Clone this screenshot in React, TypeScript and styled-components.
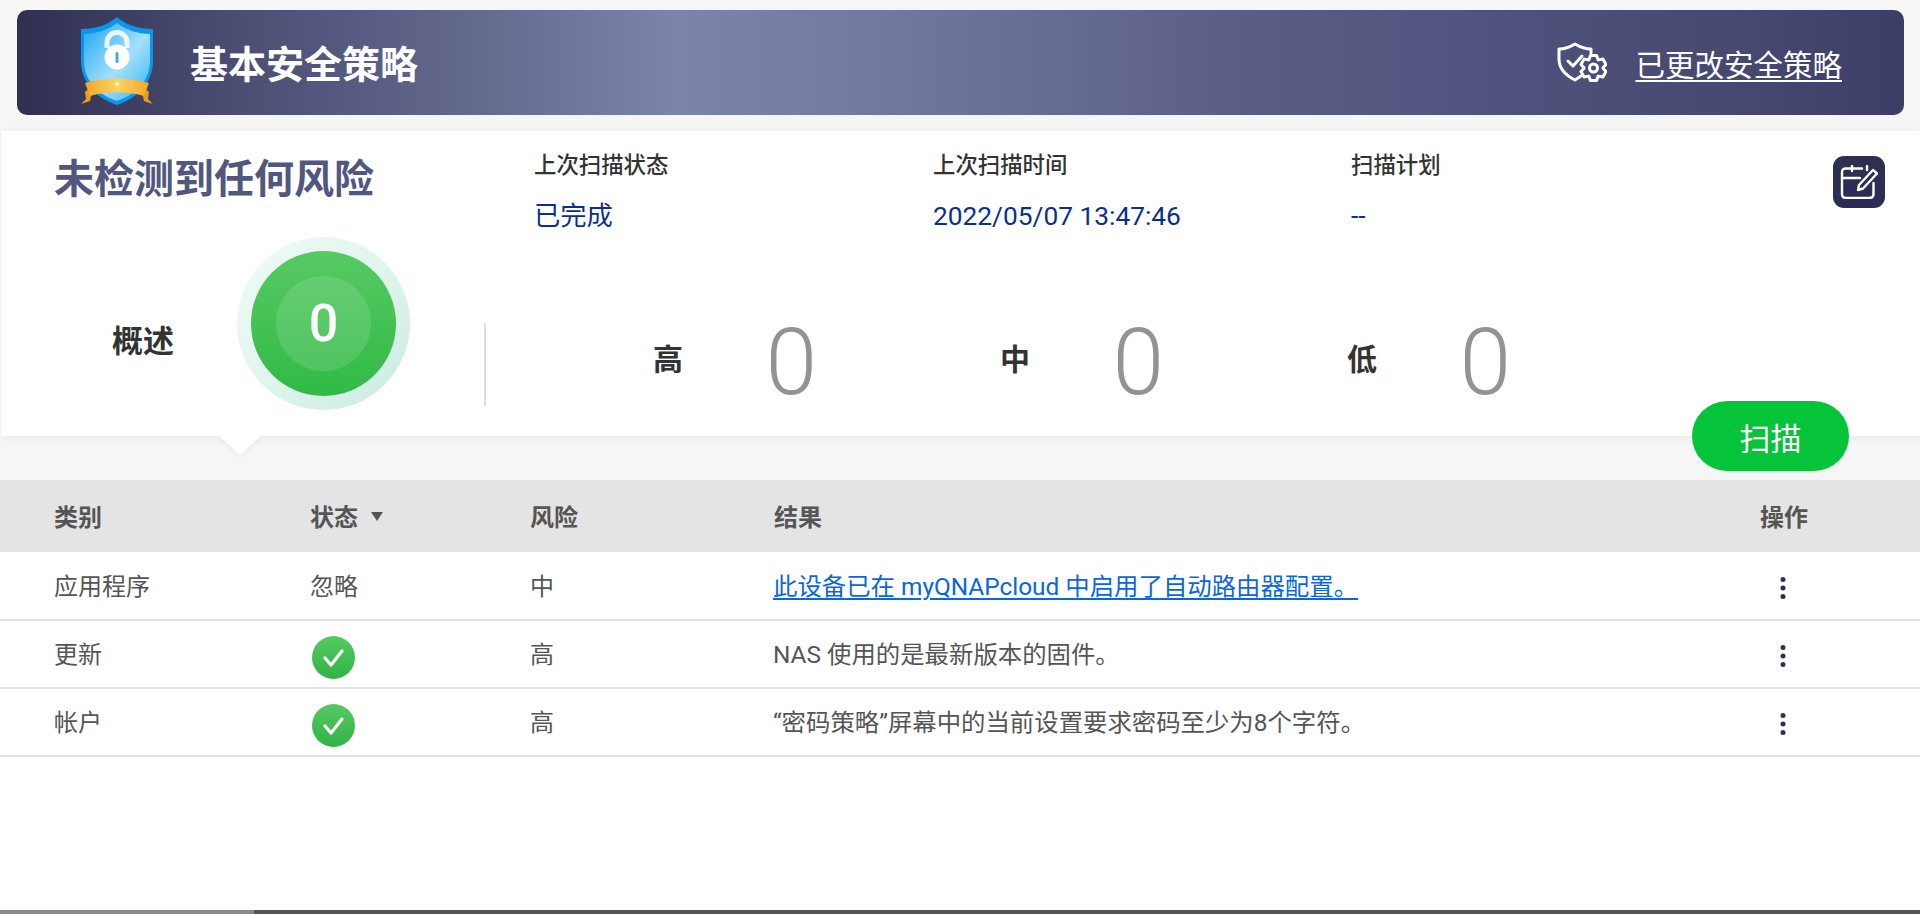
import styled, { createGlobalStyle } from 'styled-components';

const GlobalStyle = createGlobalStyle`
  html, body {
    margin: 0;
    padding: 0;
    background: #fff;
  }
  * {
    box-sizing: border-box;
  }
  body {
    font-family: Roboto, "Noto Sans CJK SC", sans-serif;
    overflow: hidden;
  }
`;

const rows = [
  { category: '应用程序', status: '忽略', risk: '中', result: '此设备已在 myQNAPcloud 中启用了自动路由器配置。', link: true },
  { category: '更新', status: 'ok', risk: '高', result: 'NAS 使用的是最新版本的固件。', link: false },
  { category: '帐户', status: 'ok', risk: '高', result: '“密码策略”屏幕中的当前设置要求密码至少为8个字符。', link: false },
];

const ShieldLogo = () => (
  <svg width="74" height="89" viewBox="0 0 74 89">
    <defs>
      <linearGradient id="shieldFill" x1="0" y1="0" x2="1" y2="1">
        <stop offset="0" stopColor="#1aa7f2" />
        <stop offset="0.55" stopColor="#a5e0fb" />
        <stop offset="1" stopColor="#2cb4f0" />
      </linearGradient>
      <linearGradient id="ribbonFill" x1="0" y1="0" x2="1" y2="0">
        <stop offset="0" stopColor="#f3a52a" />
        <stop offset="0.5" stopColor="#fbd35f" />
        <stop offset="1" stopColor="#f3a52a" />
      </linearGradient>
    </defs>
    <path d="M37 0C46 8 58 12 73 12V44C73 64 60 80 37 88C14 80 1 64 1 44V12C16 12 28 8 37 0Z" fill="#0c95ec" />
    <path d="M37 6C46 13 58 17 70 17V44C70 62 58 77 37 84C16 77 4 62 4 44V17C16 17 28 13 37 6Z" fill="url(#shieldFill)" />
    <path d="M5 75L14 66L10 84L1 87L6 82Z" fill="#eb9d1f" />
    <path d="M69 75L60 66L64 84L73 87L68 82Z" fill="#eb9d1f" />
    <path d="M5 66C26 60 48 60 69 66L64 79C46 74 28 74 10 79Z" fill="url(#ribbonFill)" />
    <circle cx="37" cy="67" r="2" fill="#fff4bf" />
    <path d="M27 31V26C27 12 47 12 47 26V31" fill="none" stroke="#fff" strokeOpacity="0.85" strokeWidth="5" />
    <circle cx="37" cy="40" r="12.500" fill="#fff" />
    <rect x="35.500" y="35" width="3" height="11" rx="1.500" fill="#4aa8d8" />
  </svg>
);

// outline of a six tooth gear around (cx, cy)
const gearPath = (cx: number, cy: number, outer: number, inner: number) => {
  const points: string[] = [];
  for (let i = 0; i < 6; i++) {
    const mid = (i * Math.PI) / 3 - Math.PI / 2;
    [
      [inner, mid - 0.5],
      [outer, mid - 0.24],
      [outer, mid + 0.24],
      [inner, mid + 0.5],
    ].forEach(([r, a]) => {
      points.push(`${(cx + r * Math.cos(a)).toFixed(1)} ${(cy + r * Math.sin(a)).toFixed(1)}`);
    });
  }
  return `M${points.join('L')}Z`;
};

const PolicyIcon = () => (
  <svg width="50" height="42" viewBox="0 0 50 42" fill="none" stroke="#fff" strokeWidth="3" strokeLinejoin="round" strokeLinecap="round">
    <path d="M24 34C22 35.500 20 36.500 18 38C8 33 2 27 2 17V7C8 7 13 5 18 2C23 5 28 7 34 7V11" />
    <path d="M11 19L16 24L25 14" />
    <path d={gearPath(36.500, 26, 13, 9.500)} />
    <circle cx="36.500" cy="26" r="4" />
  </svg>
);

const CalendarEditIcon = () => (
  <svg width="38" height="34" viewBox="0 0 38 34" fill="none" stroke="#fff" strokeWidth="2.400" strokeLinecap="round" strokeLinejoin="round">
    <path d="M33.500 18V29C33.500 32 32 33 29 33H6C3 33 2 32 2 29V7C2 4.500 3 3.500 6 3.500H22" />
    <path d="M2 13H20" />
    <path d="M12 1V6" />
    <path d="M27 1V5" />
    <path d="M18 25L19 20L33 5L37 8.500L23 23.500Z" />
  </svg>
);

const CheckBadge = () => (
  <svg width="43" height="43" viewBox="0 0 43 43">
    <defs>
      <linearGradient id="checkFill" x1="0" y1="0" x2="0" y2="1">
        <stop offset="0" stopColor="#58c964" />
        <stop offset="1" stopColor="#2fb344" />
      </linearGradient>
    </defs>
    <circle cx="21.500" cy="21.500" r="21.500" fill="url(#checkFill)" />
    <path d="M13 22L19 29L30 15" fill="none" stroke="#fff" strokeWidth="3.200" strokeLinecap="round" strokeLinejoin="round" />
  </svg>
);

const MoreIcon = () => (
  <svg width="6" height="24" viewBox="0 0 6 24" fill="#2f3050">
    <circle cx="3" cy="3.500" r="2.500" />
    <circle cx="3" cy="12" r="2.500" />
    <circle cx="3" cy="20.500" r="2.500" />
  </svg>
);

export default function App() {
  return (
    <Page>
      <GlobalStyle />
      <Banner>
        <BannerLeft>
          <LogoWrap>
            <ShieldLogo />
          </LogoWrap>
          <BannerTitle>基本安全策略</BannerTitle>
        </BannerLeft>
        <BannerRight>
          <PolicyIcon />
          <BannerLink>已更改安全策略</BannerLink>
        </BannerRight>
      </Banner>

      <Panel>
        <TopRow>
          <PanelTitle>未检测到任何风险</PanelTitle>
          <Info>
            <InfoLabel>上次扫描状态</InfoLabel>
            <InfoValue>已完成</InfoValue>
          </Info>
          <Info>
            <InfoLabel>上次扫描时间</InfoLabel>
            <InfoValue>2022/05/07 13:47:46</InfoValue>
          </Info>
          <Info>
            <InfoLabel>扫描计划</InfoLabel>
            <InfoValue>--</InfoValue>
          </Info>
          <EditButton>
            <CalendarEditIcon />
          </EditButton>
        </TopRow>
        <SummaryRow>
          <SummaryLabel>概述</SummaryLabel>
          <Halo>
            <Disc>
              <DiscCenter>0</DiscCenter>
            </Disc>
          </Halo>
          <Divider />
          <Stats>
            {['高', '中', '低'].map((level) => (
              <Stat key={level}>
                <StatLabel>{level}</StatLabel>
                <StatValue>0</StatValue>
              </Stat>
            ))}
          </Stats>
        </SummaryRow>
        <ScanButton>扫描</ScanButton>
      </Panel>

      <Table>
        <HeadRow>
          <div>类别</div>
          <SortCell>状态<Caret /></SortCell>
          <div>风险</div>
          <div>结果</div>
          <div>操作</div>
        </HeadRow>
        {rows.map((row) => (
          <Row key={row.category}>
            <div>{row.category}</div>
            <div>{row.status === 'ok' ? <BadgeWrap><CheckBadge /></BadgeWrap> : row.status}</div>
            <div>{row.risk}</div>
            <ResultCell>{row.link ? <ResultLink>{row.result}</ResultLink> : row.result}</ResultCell>
            <ActionCell>
              <MoreIcon />
            </ActionCell>
          </Row>
        ))}
      </Table>

      <ScrollBar>
        <ScrollLeft />
        <ScrollRest />
      </ScrollBar>
    </Page>
  );
}

const Page = styled.div`
  display: flex;
  flex-direction: column;
  height: 914px;
  background: #f6f6f6;
`;
const Banner = styled.header`
  display: flex;
  align-items: center;
  justify-content: space-between;
  height: 105px;
  margin: 10px 16px 16px 17px;
  padding: 0 62px 0 63px;
  border-radius: 10px;
  background: linear-gradient(90deg, #2f3050 0%, #4c4e74 12%, #666b90 25%, #7d84a9 35%, #70759b 48%, #5a5e87 65%, #4e517b 80%, #46486f 92%, #3d3e68 100%);
`;
const BannerLeft = styled.div`
  display: flex;
  align-items: center;
  gap: 36px;
  padding-top: 2px;
`;
const LogoWrap = styled.div`
  display: flex;
  margin-top: -5px;
`;
const BannerTitle = styled.h1`
  margin: 0 0 4px;
  font-size: 38px;
  font-weight: 700;
  color: #fff;
`;
const BannerRight = styled.div`
  display: flex;
  align-items: center;
  gap: 28px;
`;
const BannerLink = styled.a`
  font-size: 29.500px;
  color: #fff;
  text-decoration: underline;
  text-underline-offset: 4px;
`;
const Panel = styled.section`
  position: relative;
  z-index: 1;
  height: 305px;
  margin-left: 1px;
  background: #fff;
  box-shadow: 0 2px 8px rgba(0, 0, 0, 0.06);
  &::after {
    content: '';
    position: absolute;
    left: 218px;
    bottom: -19px;
    border-left: 21px solid transparent;
    border-right: 21px solid transparent;
    border-top: 19px solid #fff;
    filter: drop-shadow(0 2px 2px rgba(0, 0, 0, 0.05));
  }
`;
const TopRow = styled.div`
  display: grid;
  grid-template-columns: 479px 399px 418px 1fr 52px;
  height: 106px;
  padding: 25px 35px 0 54px;
`;
const PanelTitle = styled.h2`
  margin: 2px 0 0 -1px;
  font-size: 40px;
  line-height: 44px;
  font-weight: 700;
  color: #52577f;
`;
const Info = styled.div`
  display: flex;
  flex-direction: column;
  gap: 25px;
`;
const InfoLabel = styled.div`
  font-size: 22.400px;
  line-height: 22px;
  font-weight: 500;
  color: #333;
  margin-top: -2px;
`;
const InfoValue = styled.div`
  font-size: 26.300px;
  line-height: 30px;
  color: #0a2f8c;
`;
const EditButton = styled.button`
  grid-column: 5;
  display: flex;
  align-items: center;
  justify-content: center;
  width: 52px;
  height: 52px;
  padding: 0;
  border: none;
  border-radius: 11px;
  background: linear-gradient(180deg, #2f3050, #2a2c56);
`;
const SummaryRow = styled.div`
  display: flex;
  align-items: flex-start;
`;
const SummaryLabel = styled.div`
  margin: 85px 0 0 111px;
  width: 62px;
  font-size: 31px;
  line-height: 40px;
  font-weight: 700;
  color: #333;
  white-space: nowrap;
`;
const Halo = styled.div`
  display: flex;
  align-items: center;
  justify-content: center;
  width: 173px;
  height: 173px;
  margin-left: 63px;
  border-radius: 50%;
  background: linear-gradient(135deg, #f1fbf7 0%, #e0f5ec 50%, #c9ebe3 100%);
`;
const Disc = styled.div`
  display: flex;
  align-items: center;
  justify-content: center;
  width: 145px;
  height: 145px;
  border-radius: 50%;
  background: linear-gradient(180deg, #58c964, #30ba45);
`;
const DiscCenter = styled.div`
  display: flex;
  align-items: center;
  justify-content: center;
  width: 95px;
  height: 95px;
  border-radius: 50%;
  background: rgba(255, 255, 255, 0.12);
  font-size: 52px;
  font-weight: 500;
  color: #fff;
`;
const Divider = styled.div`
  width: 2px;
  height: 83px;
  margin: 86px 0 0 74px;
  background: #dddddd;
`;
const Stats = styled.div`
  display: flex;
  margin: 84px 0 0 167px;
`;
const Stat = styled.div`
  display: flex;
  align-items: center;
  width: 347px;
  height: 76px;
`;
const StatLabel = styled.div`
  width: 112.500px;
  margin-bottom: 5px;
  font-size: 30px;
  font-weight: 700;
  color: #333;
`;
const StatValue = styled.div`
  margin-top: 7px;
  font-size: 93px;
  line-height: 76px;
  font-weight: 300;
  color: #939393;
`;
const ScanButton = styled.button`
  position: absolute;
  right: 71px;
  bottom: -35px;
  width: 157px;
  height: 70px;
  border: none;
  border-radius: 35px;
  background: #05c43a;
  color: #fff;
  font-family: inherit;
  font-size: 31px;
  z-index: 2;
`;
const Table = styled.section`
  flex: 1;
  margin-top: 44px;
  background: #fff;
`;
const columns = `
  display: grid;
  grid-template-columns: 256px 220px 244px 986px 1fr;
  align-items: center;
  padding-left: 54px;
`;
const HeadRow = styled.div`
  ${columns}
  height: 72px;
  margin-bottom: 1px;
  padding-bottom: 2px;
  background: #e4e4e4;
  font-size: 24px;
  font-weight: 700;
  color: #555;
`;
const SortCell = styled.div`
  display: flex;
  align-items: center;
  gap: 13px;
`;
const Caret = styled.span`
  width: 0;
  height: 0;
  margin-top: 3px;
  border-left: 6px solid transparent;
  border-right: 6px solid transparent;
  border-top: 9px solid #555;
`;
const Row = styled.div`
  ${columns}
  height: 68px;
  padding-bottom: 3px;
  border-bottom: 2px solid #e4e4e4;
  font-size: 24px;
  color: #555;
  > div {
    display: flex;
    align-items: center;
  }
`;
const BadgeWrap = styled.div`
  display: flex;
  margin: 10px 0 0 2px;
`;
const ResultCell = styled.div`
  margin-left: -1px;
  font-size: 24.400px;
`;
const ResultLink = styled.a`
  color: #0a66e0;
  text-decoration: underline;
  text-underline-offset: 3px;
`;
const ActionCell = styled.div`
  padding: 7px 0 0 20px;
`;
const ScrollBar = styled.div`
  display: flex;
  flex: none;
  height: 4px;
`;
const ScrollLeft = styled.div`
  width: 254px;
  background: #8a8a8a;
`;
const ScrollRest = styled.div`
  flex: 1;
  background: #555;
`;
